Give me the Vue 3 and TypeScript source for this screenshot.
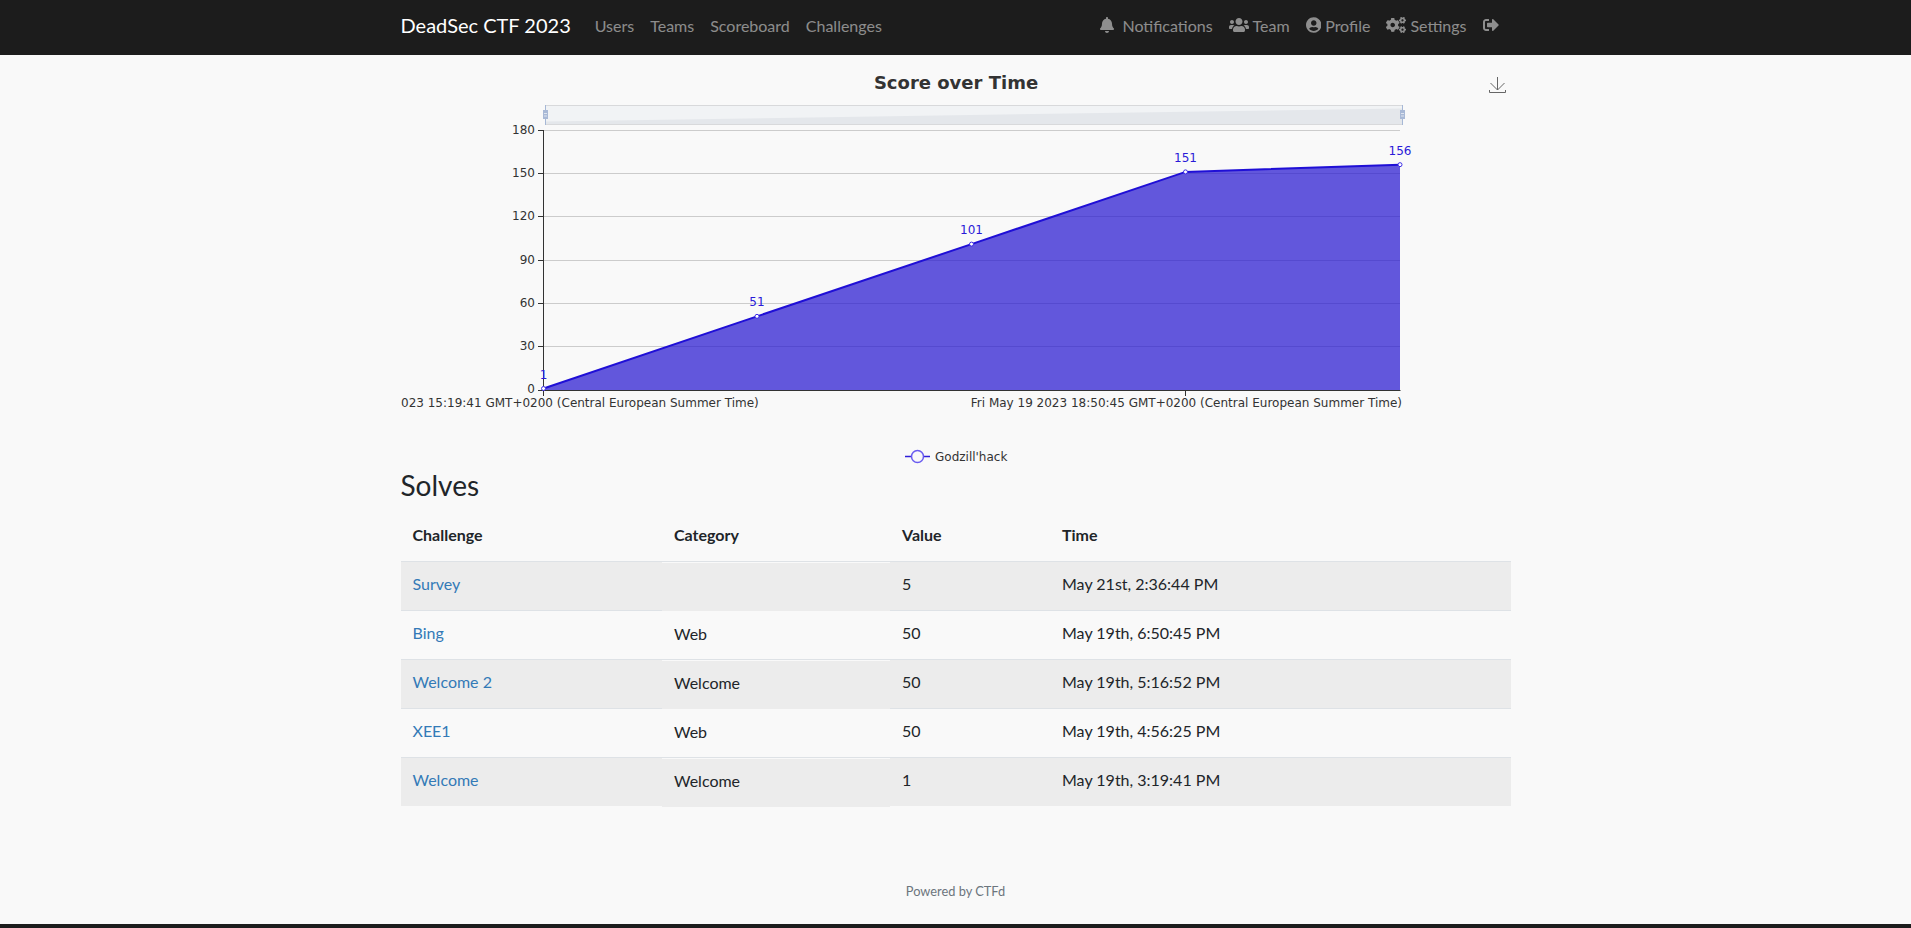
<script setup lang="ts">
type Solve = {
  challenge: string
  category: string
  value: number
  time: string
}

const navLeft = ['Users', 'Teams', 'Scoreboard', 'Challenges']

const icons = {
  bell: {
    box: '0 0 448 512',
    d: 'M224 512c35.32 0 63.97-28.65 63.97-64H160.03c0 35.35 28.65 64 63.97 64zm215.39-149.71c-19.32-20.76-55.47-51.99-55.47-154.29 0-77.7-54.48-139.9-127.94-155.16V32c0-17.67-14.32-32-31.98-32s-31.98 14.33-31.98 32v20.84C118.56 68.1 64.08 130.3 64.08 208c0 102.3-36.15 133.53-55.47 154.29-6 6.45-8.66 14.16-8.61 21.71.11 16.4 12.98 32 32.1 32h383.8c19.12 0 32-15.6 32.1-32 .05-7.55-2.61-15.27-8.61-21.71z',
  },
  users: {
    box: '0 0 640 512',
    d: 'M96 224c35.3 0 64-28.7 64-64s-28.7-64-64-64-64 28.7-64 64 28.7 64 64 64zm448 0c35.3 0 64-28.7 64-64s-28.7-64-64-64-64 28.7-64 64 28.7 64 64 64zm32 32h-64c-17.6 0-33.5 7.1-45.1 18.6 40.3 22.1 68.9 62 75.1 109.4h66c17.7 0 32-14.3 32-32v-32c0-35.3-28.7-64-64-64zm-256 0c61.9 0 112-50.1 112-112S381.9 32 320 32 208 82.1 208 144s50.1 112 112 112zm76.8 32h-8.3c-20.8 10-43.9 16-68.5 16s-47.6-6-68.5-16h-8.3C179.6 288 128 339.6 128 403.2V432c0 26.5 21.5 48 48 48h288c26.5 0 48-21.5 48-48v-28.8c0-63.6-51.6-115.2-115.2-115.2zm-223.7-13.4C161.5 263.1 145.6 256 128 256H64c-35.3 0-64 28.7-64 64v32c0 17.7 14.3 32 32 32h65.9c6.3-47.4 34.9-87.3 75.2-109.4z',
  },
  profile: {
    box: '0 0 496 512',
    d: 'M248 8C111 8 0 119 0 256s111 248 248 248 248-111 248-248S385 8 248 8zm0 96c48.6 0 88 39.4 88 88s-39.4 88-88 88-88-39.4-88-88 39.4-88 88-88zm0 344c-58.7 0-111.3-26.6-146.5-68.2 18.8-35.4 55.6-59.8 98.5-59.8 2.4 0 4.8.4 7.1 1.1 13 4.2 26.6 6.9 40.9 6.9 14.3 0 28-2.7 40.9-6.9 2.3-.7 4.7-1.1 7.1-1.1 42.9 0 79.7 24.4 98.5 59.8C359.3 421.4 306.7 448 248 448z',
  },
  cogs: {
    box: '0 0 640 512',
    d: 'M512.1 191l-8.2 14.3c-3 5.3-9.4 7.5-15.1 5.4-11.8-4.4-22.6-10.7-32.1-18.6-4.6-3.8-5.8-10.5-2.8-15.7l8.2-14.3c-6.9-8-12.3-17.3-15.9-27.4h-16.5c-6 0-11.2-4.3-12.2-10.3-2-12-2.1-24.6 0-37.1 1-6 6.2-10.4 12.2-10.4h16.5c3.6-10.1 9-19.4 15.9-27.4l-8.2-14.3c-3-5.2-1.9-11.9 2.8-15.7 9.5-7.9 20.4-14.2 32.1-18.6 5.7-2.1 12.1.1 15.1 5.4l8.2 14.3c10.5-1.9 21.2-1.9 31.7 0L552 6.3c3-5.3 9.4-7.5 15.1-5.4 11.8 4.4 22.6 10.7 32.1 18.6 4.6 3.8 5.8 10.5 2.8 15.7l-8.2 14.3c6.9 8 12.3 17.3 15.9 27.4h16.5c6 0 11.2 4.3 12.2 10.3 2 12 2.1 24.6 0 37.1-1 6-6.2 10.4-12.2 10.4h-16.5c-3.6 10.1-9 19.4-15.9 27.4l8.2 14.3c3 5.2 1.9 11.9-2.8 15.7-9.5 7.9-20.4 14.2-32.1 18.6-5.7 2.1-12.1-.1-15.1-5.4l-8.2-14.3c-10.4 1.9-21.2 1.9-31.7 0zm-10.5-58.8c38.5 29.6 82.4-14.3 52.8-52.8-38.5-29.7-82.4 14.3-52.8 52.8zM386.3 286.1l33.7 16.8c10.1 5.8 14.5 18.1 10.5 29.1-8.9 24.2-26.4 46.4-42.6 65.8-7.4 8.9-20.2 11.1-30.3 5.3l-29.1-16.8c-16 13.7-34.6 24.6-54.9 31.7v33.6c0 11.6-8.3 21.6-19.7 23.6-24.6 4.2-50.4 4.4-75.9 0-11.5-2-20-11.9-20-23.6V418c-20.3-7.2-38.9-18-54.9-31.7L74 403c-10 5.8-22.9 3.6-30.3-5.3-16.2-19.4-33.3-41.6-42.2-65.7-4-10.9.4-23.2 10.5-29.1l33.3-16.8c-3.9-20.9-3.9-42.4 0-63.4L12 205.8c-10.1-5.8-14.6-18.1-10.5-29 8.9-24.2 26-46.4 42.2-65.8 7.4-8.9 20.2-11.1 30.3-5.3l29.1 16.8c16-13.7 34.6-24.6 54.9-31.7V57.1c0-11.5 8.2-21.5 19.6-23.5 24.6-4.2 50.5-4.4 76-.1 11.5 2 20 11.9 20 23.6v33.6c20.3 7.2 38.9 18 54.9 31.7l29.1-16.8c10-5.8 22.9-3.6 30.3 5.3 16.2 19.4 33.2 41.6 42.1 65.8 4 10.9.1 23.2-10 29.1l-33.7 16.8c3.9 21 3.9 42.5 0 63.5zm-117.6 21.1c59.2-77-28.7-164.9-105.7-105.7-59.2 77 28.7 164.9 105.7 105.7zm243.4 182.7l-8.2 14.3c-3 5.3-9.4 7.5-15.1 5.4-11.8-4.4-22.6-10.7-32.1-18.6-4.6-3.8-5.8-10.5-2.8-15.7l8.2-14.3c-6.9-8-12.3-17.3-15.9-27.4h-16.5c-6 0-11.2-4.3-12.2-10.3-2-12-2.1-24.6 0-37.1 1-6 6.2-10.4 12.2-10.4h16.5c3.6-10.1 9-19.4 15.9-27.4l-8.2-14.3c-3-5.2-1.9-11.9 2.8-15.7 9.5-7.9 20.4-14.2 32.1-18.6 5.7-2.1 12.1.1 15.1 5.4l8.2 14.3c10.5-1.9 21.2-1.9 31.7 0l8.2-14.3c3-5.3 9.4-7.5 15.1-5.4 11.8 4.4 22.6 10.7 32.1 18.6 4.6 3.8 5.8 10.5 2.8 15.7l-8.2 14.3c6.9 8 12.3 17.3 15.9 27.4h16.5c6 0 11.2 4.3 12.2 10.3 2 12 2.1 24.6 0 37.1-1 6-6.2 10.4-12.2 10.4h-16.5c-3.6 10.1-9 19.4-15.9 27.4l8.2 14.3c3 5.2 1.9 11.9-2.8 15.7-9.5 7.9-20.4 14.2-32.1 18.6-5.7 2.1-12.1-.1-15.1-5.4l-8.2-14.3c-10.4 1.9-21.2 1.9-31.7 0zM501.6 431c38.5 29.6 82.4-14.3 52.8-52.8-38.5-29.6-82.4 14.3-52.8 52.8z',
  },
  signOut: {
    box: '0 0 512 512',
    d: 'M497 273L329 441c-15 15-41 4.5-41-17v-96H152c-13.3 0-24-10.7-24-24v-96c0-13.3 10.7-24 24-24h136V88c0-21.4 25.9-32 41-17l168 168c9.3 9.4 9.3 24.6 0 34zM192 436v-40c0-6.6-5.4-12-12-12H96c-17.7 0-32-14.3-32-32V160c0-17.7 14.3-32 32-32h84c6.6 0 12-5.4 12-12V76c0-6.6-5.4-12-12-12H96c-53 0-96 43-96 96v192c0 53 43 96 96 96h84c6.6 0 12-5.4 12-12z',
  },
}

const navRight = [
  { label: 'Notifications', icon: icons.bell, width: 14 },
  { label: 'Team', icon: icons.users, width: 20 },
  { label: 'Profile', icon: icons.profile, width: 15.5 },
  { label: 'Settings', icon: icons.cogs, width: 20 },
  { label: '', icon: icons.signOut, width: 16 },
]

const solves: Solve[] = [
  { challenge: 'Survey', category: '', value: 5, time: 'May 21st, 2:36:44 PM' },
  { challenge: 'Bing', category: 'Web', value: 50, time: 'May 19th, 6:50:45 PM' },
  { challenge: 'Welcome 2', category: 'Welcome', value: 50, time: 'May 19th, 5:16:52 PM' },
  { challenge: 'XEE1', category: 'Web', value: 50, time: 'May 19th, 4:56:25 PM' },
  { challenge: 'Welcome', category: 'Welcome', value: 1, time: 'May 19th, 3:19:41 PM' },
]

// chart uses page coordinates through the svg viewBox
const baseY = 390
const yPerPoint = 260 / 180
const scorePoints = [
  { x: 543.5, score: 1 },
  { x: 757, score: 51 },
  { x: 971.5, score: 101 },
  { x: 1185.5, score: 151 },
  { x: 1400, score: 156 },
].map(p => ({ ...p, y: baseY - p.score * yPerPoint }))

const yTicks = [0, 30, 60, 90, 120, 150, 180].map(v => ({
  v,
  y: Math.floor(baseY - v * yPerPoint) + 0.5,
}))

const line = scorePoints.map(p => `${p.x},${p.y}`).join(' ')
const area = `543.5,${baseY} ${line} 1400,${baseY}`
</script>

<template>
  <nav class="navbar">
    <div class="container nav-inner">
      <a class="brand">DeadSec CTF 2023</a>
      <a v-for="item in navLeft" :key="item" class="nav-link">{{ item }}</a>
      <div class="nav-right">
        <a
          v-for="item in navRight"
          :key="item.label"
          class="nav-link"
          :class="{ 'wide-gap': item.label === 'Notifications' }"
        >
          <svg class="nav-icon" :viewBox="item.icon.box" :style="{ width: item.width + 'px' }">
            <path :d="item.icon.d" fill="currentColor" />
          </svg>
          <span v-if="item.label">{{ item.label }}</span>
        </a>
      </div>
    </div>
  </nav>

  <main class="container">
    <svg class="chart" viewBox="401 55 1110 413" width="1110" height="413">
      <text x="956" y="89" class="chart-title" text-anchor="middle">Score over Time</text>

      <!-- save as image -->
      <path
        d="M1497.500 77v13M1490.500 83l7 7 7-7M1489.500 90v2.500h16V90"
        fill="none"
        stroke="#666"
      />

      <!-- data zoom -->
      <rect x="545.500" y="105.500" width="857" height="19" fill="#f1f3f5" stroke="#d8d9db" />
      <polygon points="545.500,121.500 1402,108.500 1402,124 545.500,124" fill="#e4e7eb" />
      <line x1="545.500" y1="105" x2="545.500" y2="125" stroke="#a6b8d6" />
      <line x1="1402.500" y1="105" x2="1402.500" y2="125" stroke="#a6b8d6" />
      <rect x="543" y="110" width="5" height="9" fill="#a9b9d6" />
      <rect x="1400" y="110" width="5" height="9" fill="#a9b9d6" />
      <path d="M544 113.500h3M544 116h3M1401 113.500h3M1401 116h3" stroke="#dfe5ef" />

      <!-- grid -->
      <line
        v-for="t in yTicks.slice(1)"
        :key="t.v"
        x1="543.500"
        x2="1400"
        :y1="t.y"
        :y2="t.y"
        stroke="#ccc"
      />

      <polygon :points="area" fill="#2212d0" fill-opacity="0.7" />
      <polyline :points="line" fill="none" stroke="#1f0fd6" stroke-width="2" />

      <!-- axes -->
      <line x1="543.500" x2="543.500" y1="130" y2="391" stroke="#333" />
      <line x1="543" x2="1400.500" y1="390.500" y2="390.500" stroke="#333" />
      <line
        v-for="t in yTicks"
        :key="'tick' + t.v"
        x1="538"
        x2="543.500"
        :y1="t.y"
        :y2="t.y"
        stroke="#333"
      />
      <line x1="543.500" x2="543.500" y1="390.500" y2="396" stroke="#333" />
      <line x1="1185.500" x2="1185.500" y1="390.500" y2="396" stroke="#333" />

      <text
        v-for="t in yTicks"
        :key="'label' + t.v"
        x="535"
        :y="t.v === 0 ? 393 : t.y + 3"
        text-anchor="end"
        class="axis-text"
      >{{ t.v }}</text>

      <text x="401" y="407" class="axis-text">023 15:19:41 GMT+0200 (Central European Summer Time)</text>
      <text x="1402" y="407" class="axis-text" text-anchor="end">Fri May 19 2023 18:50:45 GMT+0200 (Central European Summer Time)</text>

      <g v-for="p in scorePoints" :key="p.x">
        <circle :cx="p.x" :cy="p.y" r="2" fill="#fff" stroke="#3d2ee6" />
        <text :x="p.x" :y="p.y - 10" class="point-text" text-anchor="middle">{{ p.score }}</text>
      </g>

      <!-- legend -->
      <line x1="905" x2="930" y1="456.500" y2="456.500" stroke="#2f1fd8" stroke-width="1.500" />
      <circle cx="917.500" cy="456.500" r="6" fill="#f9f9f9" stroke="#6a5cf0" stroke-width="1.500" />
      <text x="935" y="460.500" class="axis-text">Godzill'hack</text>
    </svg>

    <h3 class="solves-title">Solves</h3>

    <table class="solves">
      <thead>
        <tr>
          <th class="col-challenge">Challenge</th>
          <th class="col-category">Category</th>
          <th class="col-value">Value</th>
          <th>Time</th>
        </tr>
      </thead>
      <tbody>
        <tr v-for="solve in solves" :key="solve.time">
          <td><a class="link">{{ solve.challenge }}</a></td>
          <td class="category">{{ solve.category }}</td>
          <td>{{ solve.value }}</td>
          <td>{{ solve.time }}</td>
        </tr>
      </tbody>
    </table>
  </main>

  <footer class="footer">Powered by CTFd</footer>
</template>

<style>
html {
  background: #1c1c1c;
}

body {
  background: #f9f9f9;
  min-height: 924px;
  display: flex;
  flex-direction: column;
}

#app {
  display: flex;
  flex-direction: column;
  flex: 1;
}
</style>

<style scoped>
.container {
  width: 1110px;
  margin: 0 auto;
  font-family: Lato, sans-serif;
  font-size: 16px;
  color: #212529;
}

.navbar {
  background: #1c1c1c;
  height: 55px;
  padding-bottom: 5px;
  box-sizing: border-box;
  display: flex;
  align-items: center;
  font-family: Lato, sans-serif;
}

.nav-inner {
  display: flex;
  align-items: center;
}

.brand {
  color: #fff;
  font-size: 20px;
  margin-right: 16px;
}

.nav-link {
  color: rgba(255, 255, 255, 0.5);
  padding: 0 8px;
  display: flex;
  align-items: center;
  gap: 4px;
}

.wide-gap {
  gap: 8px;
}

.nav-right {
  margin-left: auto;
  margin-right: 4px;
  display: flex;
  align-items: center;
}

.nav-icon {
  height: 16px;
  display: block;
}

.chart {
  display: block;
}

.chart-title {
  font: bold 18px "DejaVu Sans", sans-serif;
  fill: #333;
}

.axis-text {
  font: 12px "DejaVu Sans", sans-serif;
  fill: #333;
}

.point-text {
  font: 12px "DejaVu Sans", sans-serif;
  fill: #2a1ad8;
}

.solves-title {
  font-size: 28px;
  font-weight: 400;
  line-height: 1.2;
  margin: 1px 0 8px;
}

.solves {
  width: 100%;
  border-collapse: collapse;
  table-layout: fixed;
}

.solves th,
.solves td {
  padding: 12px;
  text-align: left;
  line-height: 24px;
}

.solves th {
  font-weight: 700;
  padding-bottom: 14px;
}

.solves td {
  border-top: 1px solid #dee2e6;
  padding-top: 10px;
  padding-bottom: 14px;
}

.col-challenge {
  width: 237.5px;
}

.col-category {
  width: 204px;
}

.col-value {
  width: 136px;
}

.solves tbody tr:nth-child(odd) td {
  background: #ececec;
}

.category {
  transform: translateY(1px);
}

.link {
  color: #337ab7;
}

.footer {
  margin-top: auto;
  padding-bottom: 25px;
  text-align: center;
  font-family: Lato, sans-serif;
  font-size: 12.8px;
  color: #6c757d;
}
</style>
